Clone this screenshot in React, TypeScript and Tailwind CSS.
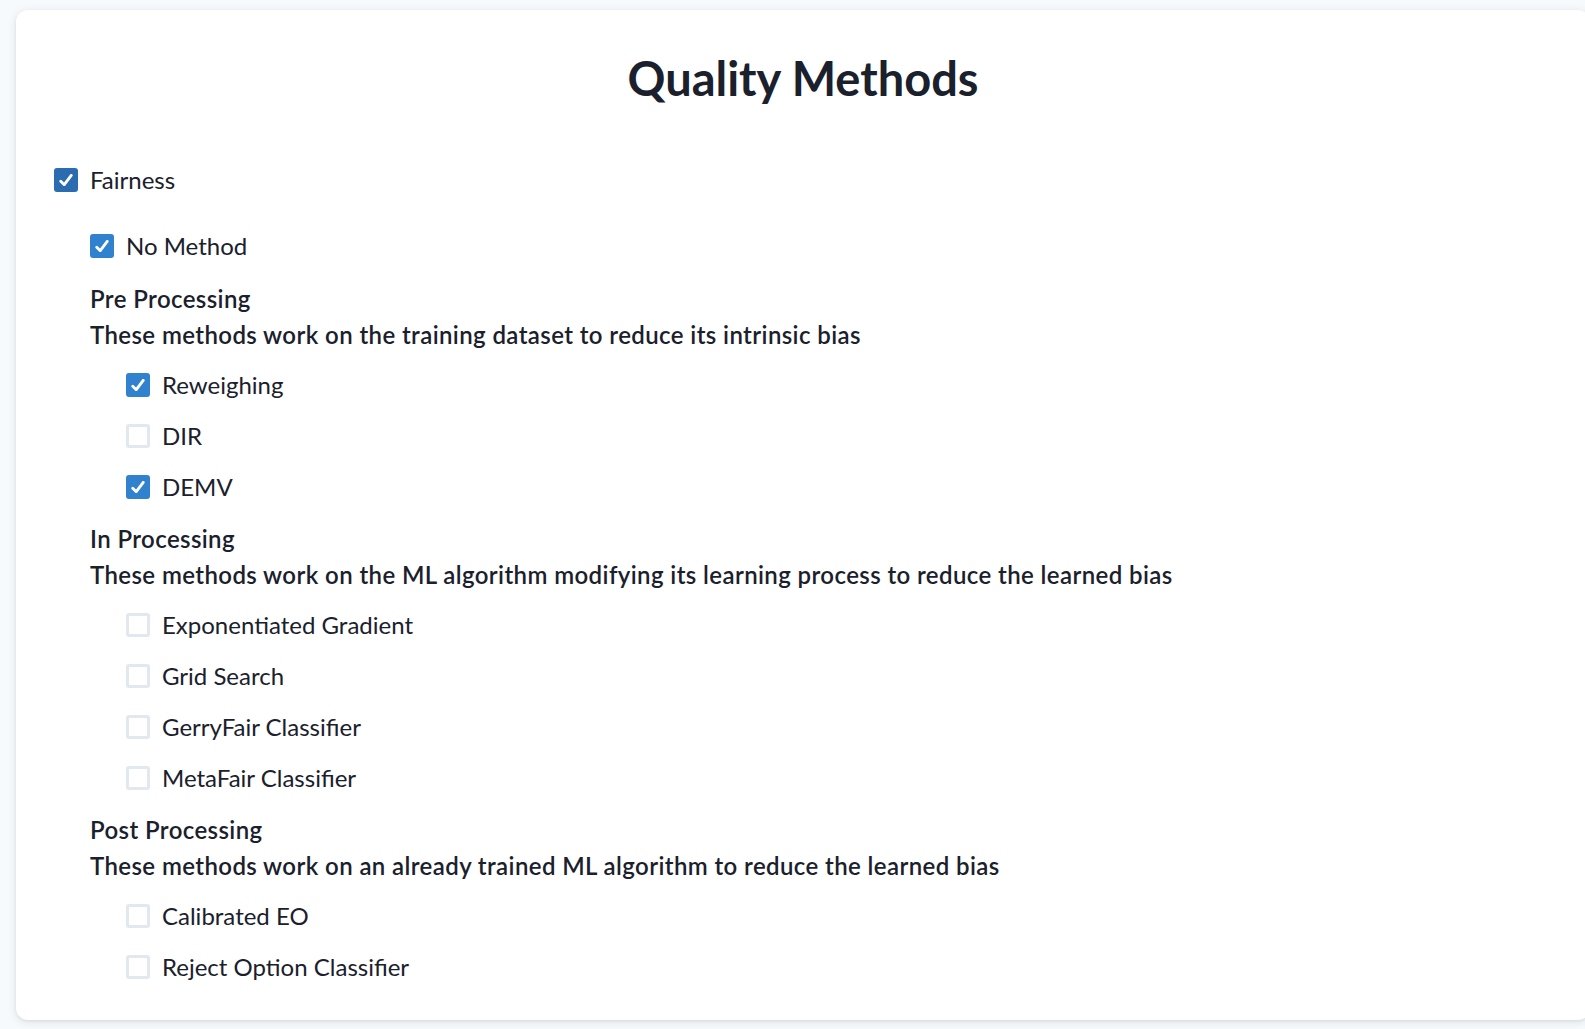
import { ReactNode } from 'react';

type Item = { label: string; checked: boolean };

const groups: { title: string; desc: string; gap: string; items: Item[] }[] = [
  {
    title: 'Pre Processing',
    desc: 'These methods work on the training dataset to reduce its intrinsic bias',
    gap: 'mt-[17px]',
    items: [
      { label: 'Reweighing', checked: true },
      { label: 'DIR', checked: false },
      { label: 'DEMV', checked: true },
    ],
  },
  {
    title: 'In Processing',
    desc: 'These methods work on the ML algorithm modifying its learning process to reduce the learned bias',
    gap: 'mt-[16px]',
    items: [
      { label: 'Exponentiated Gradient', checked: false },
      { label: 'Grid Search', checked: false },
      { label: 'GerryFair Classifier', checked: false },
      { label: 'MetaFair Classifier', checked: false },
    ],
  },
  {
    title: 'Post Processing',
    desc: 'These methods work on an already trained ML algorithm to reduce the learned bias',
    gap: 'mt-[16px]',
    items: [
      { label: 'Calibrated EO', checked: false },
      { label: 'Reject Option Classifier', checked: false },
    ],
  },
];

const CheckRow = ({ checked, dark, children }: { checked: boolean; dark?: boolean; children: ReactNode }) => (
  <label className="flex items-center h-[36px] gap-[12px] cursor-pointer">
    <span
      className={
        checked
          ? dark
            ? 'flex items-center justify-center w-[24px] h-[24px] rounded-[3px] bg-[#2b6cb0]'
            : 'flex items-center justify-center w-[24px] h-[24px] rounded-[3px] bg-[#3182ce]'
          : 'flex items-center justify-center w-[24px] h-[24px] rounded-[3px] border-[3px] border-[#e2e8f0] bg-white'
      }
    >
      {checked && (
        <svg viewBox="0 0 12 10" className="w-[14px] h-[12px]" fill="none">
          <polyline points="1.5 6 4.5 9 10.5 1" stroke="white" strokeWidth="2.4" strokeLinecap="round" strokeLinejoin="round" />
        </svg>
      )}
    </span>
    <span className="text-[24px] leading-[36px] text-[#1a202c]">{children}</span>
  </label>
);

const App = () => {
  return (
    <div className="w-full min-h-screen overflow-hidden bg-[#f7fafc] font-['Lato',sans-serif]">
      <div className="pt-[10px] pl-[16px]">
        <div className="w-[1574px] h-[1010px] bg-white rounded-xl shadow-[0_2px_10px_rgba(0,0,0,0.1),0_1px_3px_rgba(0,0,0,0.06)] pt-[41px] pl-[38px]">
          <h1 className="text-center text-[47px] leading-[54px] font-bold text-[#1a202c] pr-[38px]">Quality Methods</h1>

          <div className="mt-[57px]">
            <CheckRow checked dark>
              Fairness
            </CheckRow>
          </div>

          <div className="pl-[36px] mt-[30px]">
            <CheckRow checked>No Method</CheckRow>

            {groups.map(group => (
              <div key={group.title} className={group.gap}>
                <p className="text-[24px] leading-[36px] font-semibold tracking-[0.4px] text-[#1a202c]">{group.title}</p>
                <p className="text-[24px] leading-[36px] font-semibold tracking-[0.4px] text-[#1a202c]">{group.desc}</p>
                <div className="pl-[36px] mt-[14px] flex flex-col gap-[15px]">
                  {group.items.map(item => (
                    <CheckRow key={item.label} checked={item.checked}>
                      {item.label}
                    </CheckRow>
                  ))}
                </div>
              </div>
            ))}
          </div>
        </div>
      </div>
    </div>
  );
};

export default App;
